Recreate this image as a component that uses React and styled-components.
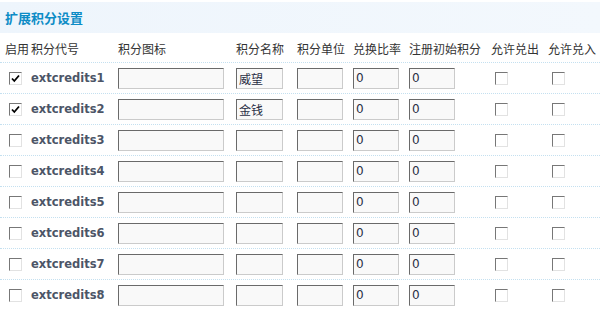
import React from 'react';
import styled, { createGlobalStyle } from 'styled-components';

const GlobalStyle = createGlobalStyle`
    body {
        margin: 0;
        background: #fff;
        font-family: "Noto Sans CJK SC", "DejaVu Sans", sans-serif;
        font-size: 12px;
        color: #333;
    }
`;

const COLS = '26px 87px 118px 61px 56px 56px 82px 57px 57px';

const Page = styled.div`
    width: 600px;
    padding-top: 2px;
`;

const TitleBar = styled.div`
    height: 31px;
    line-height: 31px;
    padding-left: 5px;
    background: linear-gradient(to right, #eef5fc, #f3f8fd);
    color: #0d8cc6;
    font-weight: bold;
    font-size: 13px;
`;

const HeadRow = styled.div`
    display: grid;
    grid-template-columns: ${COLS};
    height: 30px;
    box-sizing: border-box;
    border-bottom: 1px dotted #c4e0f0;
`;

const HeadCell = styled.div`
    padding: 8px 0 0 5px;
    line-height: 16px;
    white-space: nowrap;
    color: #333;
`;

const Row = styled.div`
    display: grid;
    grid-template-columns: ${COLS};
    height: 31px;
    box-sizing: border-box;
    border-bottom: 1px dotted #c4e0f0;
    align-items: center;
`;

const Cell = styled.div`
    padding-left: 5px;
    display: flex;
    align-items: center;
`;

const Code = styled.span`
    font-family: "DejaVu Sans", Verdana, sans-serif;
    font-weight: bold;
    font-size: 11.5px;
    color: #4c5567;
`;

const Field = styled.div`
    width: ${p => p.$w}px;
    height: 21px;
    box-sizing: border-box;
    border: 1px solid #cbcbcb;
    border-top-color: #6a6a6a;
    border-left-color: #6a6a6a;
    background: #f9f9f9;
    padding-left: 2px;
    line-height: 19px;
    font-family: ${p => p.$num ? '"DejaVu Sans", Verdana, sans-serif' : '"Noto Sans CJK SC", sans-serif'};
    font-size: 12px;
    color: #2a2f45;
`;

const Box = styled.span`
    width: 13px;
    height: 13px;
    margin-left: 4px;
    box-sizing: border-box;
    border: 1px solid #e2e2e2;
    border-top-color: #777;
    border-left-color: #777;
    background: #fff;
    display: flex;
    align-items: center;
    justify-content: center;
`;

const Check = ({ on }) => (
    <Box>
        {on && (
            <svg width="9" height="9" viewBox="0 0 9 9">
                <path d="M1 4.5 L3.3 7 L8 1.5" fill="none" stroke="#000" strokeWidth="1.8" />
            </svg>
        )}
    </Box>
);

const heads = ['启用', '积分代号', '积分图标', '积分名称', '积分单位', '兑换比率', '注册初始积分', '允许兑出', '允许兑入'];

const credits = [
    { id: 1, on: true, name: '威望' },
    { id: 2, on: true, name: '金钱' },
    { id: 3 }, { id: 4 }, { id: 5 }, { id: 6 }, { id: 7 }, { id: 8 },
];

const App = () => (
    <Page>
        <GlobalStyle />
        <TitleBar>扩展积分设置</TitleBar>
        <HeadRow>
            {heads.map(h => <HeadCell key={h}>{h}</HeadCell>)}
        </HeadRow>
        {credits.map(c => (
            <Row key={c.id}>
                <Cell><Check on={c.on} /></Cell>
                <Cell><Code>extcredits{c.id}</Code></Cell>
                <Cell><Field $w={106} /></Cell>
                <Cell><Field $w={47}>{c.name}</Field></Cell>
                <Cell><Field $w={46} /></Cell>
                <Cell><Field $w={46} $num>0</Field></Cell>
                <Cell><Field $w={46} $num>0</Field></Cell>
                <Cell><Check /></Cell>
                <Cell><Check /></Cell>
            </Row>
        ))}
    </Page>
);

export default App;
